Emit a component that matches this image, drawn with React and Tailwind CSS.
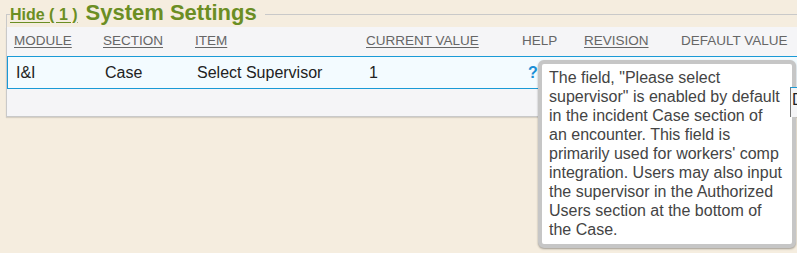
import React from 'react'

const columns = [
  { label: 'MODULE', sort: true },
  { label: 'SECTION', sort: true },
  { label: 'ITEM', sort: true },
  { label: 'CURRENT VALUE', sort: true },
  { label: 'HELP', sort: false },
  { label: 'REVISION', sort: true },
  { label: 'DEFAULT VALUE', sort: false },
]

const helpText =
  'The field, "Please select supervisor" is enabled by default in the incident Case section of an encounter. This field is primarily used for workers\' comp integration. Users may also input the supervisor in the Authorized Users section at the bottom of the Case.'

const grid = 'grid grid-cols-[89px_92px_171px_156px_62px_97px_1fr]'

export default function App() {
  return (
    <div className="relative h-[253px] w-[797px] overflow-hidden bg-[#f5eddf] font-['Liberation_Sans',Arial,sans-serif]">
      <div className="w-[830px] pl-[6px]">
        {/* legend row */}
        <div className="flex h-[27px]">
          <div className="mt-[14px] h-[13px] w-[4px] border-l border-t border-[#c9c9c9]"></div>
          <div className="flex items-baseline pt-[2px] leading-none">
            <a className="cursor-pointer text-[16px] font-bold text-[#6b8e23] underline underline-offset-2">Hide ( 1 )</a>
            <span className="ml-2 text-[22px] font-bold text-[#6b8e23]">System Settings</span>
          </div>
          <div className="ml-2 mt-[14px] h-[13px] flex-1 border-t border-[#c9c9c9]"></div>
        </div>

        {/* table panel */}
        <div className="border-b border-l border-[#c9c9c9] bg-[#f5f5f7] shadow-[0_1px_1px_rgba(0,0,0,0.12)]">
          <div className={`${grid} h-[29px] items-center pl-[7px] text-[13.5px] text-[#666]`}>
            {columns.map((c) => (
              <span key={c.label} className={c.sort ? 'cursor-pointer underline underline-offset-2' : ''}>
                {c.label}
              </span>
            ))}
          </div>
          <div className={`${grid} h-[33px] items-center border border-[#1a9ad6] bg-[#f3fbff] pl-[8px] text-[16px] text-[#222]`}>
            <span>I&amp;I</span>
            <span>Case</span>
            <span>Select Supervisor</span>
            <span className="pl-[1px]">1</span>
            <span className="pl-[4px] font-bold text-[#1a8fd6]">?</span>
            <span></span>
            <span></span>
          </div>
          <div className="h-[27px]"></div>
        </div>
      </div>

      {/* help tooltip */}
      <div className="absolute left-[538px] top-[60px] w-[258px] rounded-[6px] border-4 border-[#c6c6c6] bg-white pb-[5px] pl-[7px] pr-[9px] pt-[4px] text-[16px] leading-[19px] text-[#444] shadow-[0_1px_2px_rgba(0,0,0,0.35)]">
        {helpText}
      </div>

      {/* edge of next control, drawn over the tooltip */}
      <div className="absolute left-[790px] top-[87px] z-10 h-[30px] w-[20px] border-l border-t border-l-[#777] border-t-[#1a9ad6] bg-[#f5f5f7] pl-[1px] text-[16px] leading-[24px] text-[#222]">
        D
      </div>
    </div>
  )
}
